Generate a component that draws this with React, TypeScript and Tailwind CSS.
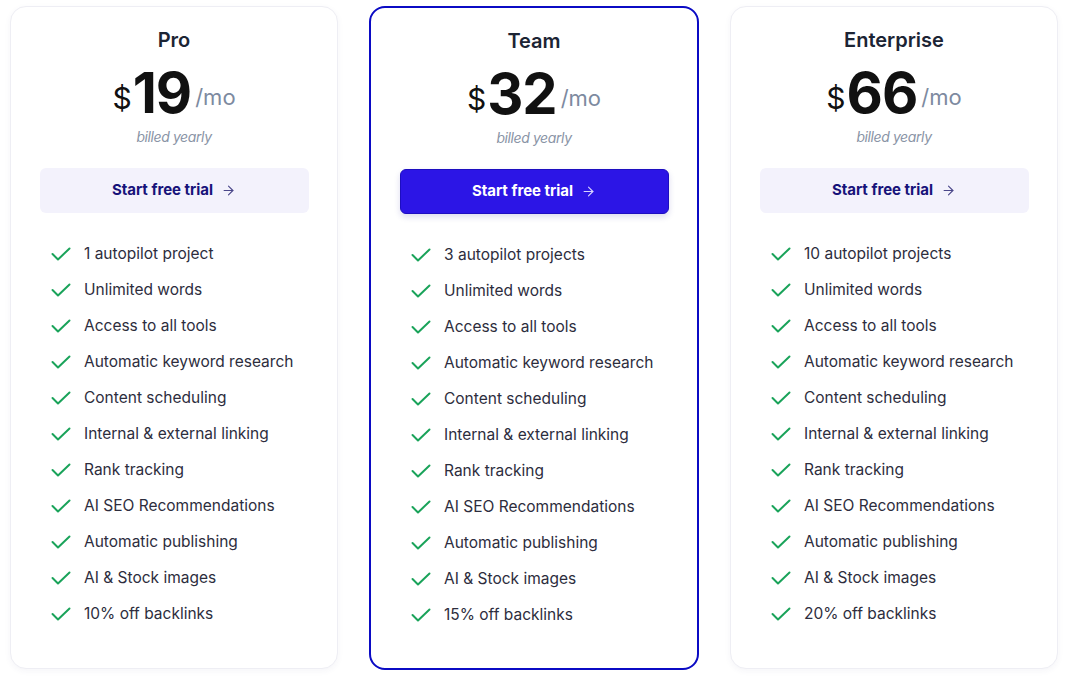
import { ArrowRight } from 'lucide-react';

const features = [
  'autopilot',
  'Unlimited words',
  'Access to all tools',
  'Automatic keyword research',
  'Content scheduling',
  'Internal & external linking',
  'Rank tracking',
  'AI SEO Recommendations',
  'Automatic publishing',
  'AI & Stock images',
  'backlinks',
];

const plans = [
  { name: 'Pro', price: 19, projects: '1 autopilot project', discount: '10% off backlinks', featured: false },
  { name: 'Team', price: 32, projects: '3 autopilot projects', discount: '15% off backlinks', featured: true },
  { name: 'Enterprise', price: 66, projects: '10 autopilot projects', discount: '20% off backlinks', featured: false },
];

function CheckMark() {
  return (
    <svg width="20" height="14" viewBox="0 0 20 14" fill="none" className="shrink-0">
      <polyline points="1.5,7 7,12.5 18.5,1.5" stroke="#1aa35a" strokeWidth="2" strokeLinecap="round" strokeLinejoin="round" />
    </svg>
  );
}

export default function App() {
  return (
    <div
      className="h-[678px] w-[1070px] bg-white flex gap-[31px] pl-[10px] pt-[6px]"
      style={{ fontFamily: 'Inter, "Noto Sans", sans-serif' }}
    >
      {plans.map((plan) => {
        const items = features.map((f) =>
          f === 'autopilot' ? plan.projects : f === 'backlinks' ? plan.discount : f
        );
        return (
          <div
            key={plan.name}
            className={
              plan.featured
                ? 'w-[330px] h-[664px] rounded-2xl border-2 border-[#0b0bc4] bg-white flex flex-col items-center pt-[19px]'
                : 'w-[328px] h-[663px] rounded-2xl border border-[#eeeef4] bg-white shadow-[0_2px_6px_rgba(60,60,120,0.05)] flex flex-col items-center pt-[19px]'
            }
          >
            <h2 className="text-[20px] leading-7 font-semibold text-[#1c2434]">{plan.name}</h2>
            <div className="mt-[11px] flex items-end leading-none">
              <span className="text-[30px] text-[#111] mb-[8px] mr-[1px]">$</span>
              <span className="text-[56px] font-bold text-[#111] tracking-[-1px]">{plan.price}</span>
              <span className="text-[22px] text-[#7d8aa0] ml-[4px] mb-[13px]">/mo</span>
            </div>
            <p className="mt-[6px] text-[14px] leading-5 italic text-[#8a94a6] tracking-[-0.4px]">billed yearly</p>
            <button
              className={
                plan.featured
                  ? 'mt-[21px] w-[269px] h-[45px] rounded-md bg-[#2c15e6] border border-[#1d0ec0] shadow-[0_3px_6px_rgba(30,20,150,0.15)] text-white flex items-center justify-center gap-2 text-[15px] font-bold'
                  : 'mt-[21px] w-[269px] h-[45px] rounded-md bg-[#f3f2fc] text-[#17137a] flex items-center justify-center gap-2 text-[15px] font-bold'
              }
            >
              Start free trial
              <ArrowRight size={15} strokeWidth={1.75} className={plan.featured ? 'text-[#d8d4ff]' : 'text-[#4a478a]'} />
            </button>
            <ul className="mt-[29px] self-stretch pl-[40px] space-y-3">
              {items.map((item) => (
                <li key={item} className="flex items-center gap-[13px] text-[15.5px] leading-6 text-[#2d2d3d]">
                  <CheckMark />
                  <span>{item}</span>
                </li>
              ))}
            </ul>
          </div>
        );
      })}
    </div>
  );
}
